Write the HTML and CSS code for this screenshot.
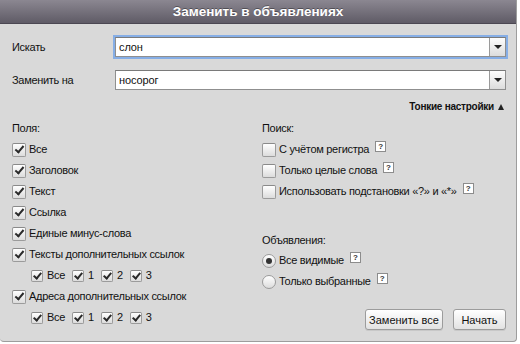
FILE: index.html
```html
<!DOCTYPE html>
<html lang="ru">
  <head>
    <meta charset="UTF-8" />
    <meta name="viewport" content="width=device-width, initial-scale=1.0" />
    <title>Заменить в объявлениях</title>
    <link rel="stylesheet" href="styles.css">
  </head>
  <body>
    <section class="dialog">
      <header class="titlebar">Заменить в объявлениях</header>

      <div class="content">
        <div class="field">
          <span class="field-label">Искать</span>
          <div class="combo combo-focus">
            <span class="combo-value">слон</span>
            <span class="combo-btn"><span class="tri"></span></span>
          </div>
        </div>
        <div class="field">
          <span class="field-label">Заменить на</span>
          <div class="combo">
            <span class="combo-value">носорог</span>
            <span class="combo-btn"><span class="tri"></span></span>
          </div>
        </div>

        <div class="advanced">Тонкие настройки<span class="up"></span></div>

        <div class="options">
          <div class="col">
            <div class="group-title">Поля:</div>
            <div class="row"><span class="box checked"></span>Все</div>
            <div class="row"><span class="box checked"></span>Заголовок</div>
            <div class="row"><span class="box checked"></span>Текст</div>
            <div class="row"><span class="box checked"></span>Ссылка</div>
            <div class="row"><span class="box checked"></span>Единые минус-слова</div>
            <div class="row"><span class="box checked"></span>Тексты дополнительных ссылок</div>
            <div class="row sub">
              <span class="item"><span class="box small checked"></span>Все</span>
              <span class="item"><span class="box small checked"></span>1</span>
              <span class="item"><span class="box small checked"></span>2</span>
              <span class="item"><span class="box small checked"></span>3</span>
            </div>
            <div class="row"><span class="box checked"></span>Адреса дополнительных ссылок</div>
            <div class="row sub">
              <span class="item"><span class="box small checked"></span>Все</span>
              <span class="item"><span class="box small checked"></span>1</span>
              <span class="item"><span class="box small checked"></span>2</span>
              <span class="item"><span class="box small checked"></span>3</span>
            </div>
          </div>

          <div class="col col-right">
            <div class="group-title">Поиск:</div>
            <div class="row"><span class="box"></span>С учётом регистра<span class="help">?</span></div>
            <div class="row"><span class="box"></span>Только целые слова<span class="help">?</span></div>
            <div class="row"><span class="box"></span>Использовать подстановки «?» и «*»<span class="help">?</span></div>

            <div class="group-title group-ads">Объявления:</div>
            <div class="row radio-row"><span class="radio selected"></span>Все видимые<span class="help">?</span></div>
            <div class="row radio-row"><span class="radio"></span>Только выбранные<span class="help">?</span></div>

            <div class="actions">
              <button class="btn btn-wide">Заменить все</button>
              <button class="btn">Начать</button>
            </div>
          </div>
        </div>
      </div>
    </section>
  </body>
</html>
```

FILE: styles.css
```css
html,
body {
  padding: 0;
  margin: 0;
  background: #fff;
}

body {
  font: 11px "Liberation Sans", Arial, sans-serif;
  letter-spacing: -0.3px;
  color: #111;
}

.dialog {
  width: 516px;
  height: 341px;
  background: #d9d9d9;
  border-right: 1px solid #9d9d9d;
  border-bottom: 1px solid #9d9d9d;
  border-radius: 0 0 4px 4px;
  overflow: hidden;
}

.titlebar {
  height: 23px;
  line-height: 23px;
  text-align: center;
  color: #fff;
  font-weight: bold;
  font-size: 13.5px;
  letter-spacing: 0;
  background: linear-gradient(#8b8791, #5f5b66);
  border-bottom: 1px solid #4b4752;
  text-shadow: 0 -1px 0 rgba(0, 0, 0, 0.35);
}

.content {
  padding: 13px 10px 0 12px;
}

/*
* Search / replace fields
*/

.field {
  display: flex;
  align-items: center;
  margin-bottom: 13px;
}

.field-label {
  width: 103px;
}

.combo {
  flex: 1;
  display: flex;
  height: 18px;
  background: #fff;
  border: 1px solid #8f8f8f;
  border-top-color: #7a7a7a;
}

.combo-focus {
  box-shadow: 0 0 0 2px #86aee6;
}

.combo-value {
  flex: 1;
  padding-left: 3px;
  line-height: 18px;
  letter-spacing: -0.1px;
}

.combo-btn {
  width: 15px;
  display: flex;
  align-items: center;
  justify-content: center;
  border-left: 1px solid #9a9a9a;
  background: linear-gradient(#fdfdfd, #dcdcdc);
}

.tri {
  width: 0;
  height: 0;
  border-left: 4px solid transparent;
  border-right: 4px solid transparent;
  border-top: 4px solid #222;
}

.advanced {
  display: flex;
  justify-content: flex-end;
  align-items: center;
  margin-top: -3px;
  font-size: 10px;
  font-weight: bold;
  letter-spacing: -0.25px;
  line-height: 14px;
  padding-right: 2px;
}

.advanced .up {
  width: 0;
  height: 0;
  margin-left: 4px;
  margin-top: -1px;
  border-left: 3px solid transparent;
  border-right: 3px solid transparent;
  border-bottom: 6px solid #222;
}

/*
* Options
*/

.options {
  display: grid;
  grid-template-columns: 250px 1fr;
  margin-top: 4px;
}

.group-title,
.row {
  height: 21px;
  line-height: 21px;
}

.row {
  display: flex;
  align-items: center;
}

.box {
  position: relative;
  width: 14px;
  height: 14px;
  margin-right: 3px;
  border: 1px solid #9b9b9b;
  border-top-color: #8a8a8a;
  border-radius: 2px;
  background: linear-gradient(#ffffff, #dcdcdc);
  box-sizing: border-box;
  flex: none;
}

.box.checked::after {
  content: "";
  position: absolute;
  left: 4px;
  top: 0px;
  width: 3px;
  height: 7px;
  border-right: 2px solid #2a2a2a;
  border-bottom: 2px solid #2a2a2a;
  transform: rotate(40deg);
}

.box.small {
  width: 12px;
  height: 12px;
  margin-right: 4px;
}

.box.small.checked::after {
  left: 3px;
  top: 0px;
  height: 6px;
}

.sub {
  padding-left: 19px;
}

.sub .item {
  display: flex;
  align-items: center;
  margin-right: 7px;
}

.help {
  display: inline-block;
  width: 9px;
  height: 9px;
  margin-left: 6px;
  margin-top: -7px;
  border: 1px solid #8c8c8c;
  background: #fff;
  font-size: 8px;
  line-height: 9px;
  letter-spacing: 0;
  text-align: center;
  font-weight: bold;
  color: #333;
  box-sizing: content-box;
}

.group-ads {
  margin-top: 28px;
  height: 20px;
  line-height: 20px;
}

.radio {
  position: relative;
  width: 14px;
  height: 14px;
  margin-right: 3px;
  border: 1px solid #9b9b9b;
  border-radius: 50%;
  background: linear-gradient(#ffffff, #dcdcdc);
  box-sizing: border-box;
  flex: none;
}

.radio.selected::after {
  content: "";
  position: absolute;
  left: 3px;
  top: 3px;
  width: 6px;
  height: 6px;
  border-radius: 50%;
  background: #333;
}

.actions {
  display: flex;
  justify-content: flex-end;
  gap: 10px;
  margin-top: 17px;
}

.btn {
  width: 53px;
  height: 21px;
  padding: 0;
  font: 11px "Liberation Sans", Arial, sans-serif;
  color: #111;
  text-align: center;
  border: 1px solid #9c9c9c;
  border-radius: 3px;
  background: linear-gradient(#ffffff, #e2e2e2);
  box-shadow: 0 1px 0 rgba(0, 0, 0, 0.08);
}

.btn-wide {
  width: 78px;
}
```
